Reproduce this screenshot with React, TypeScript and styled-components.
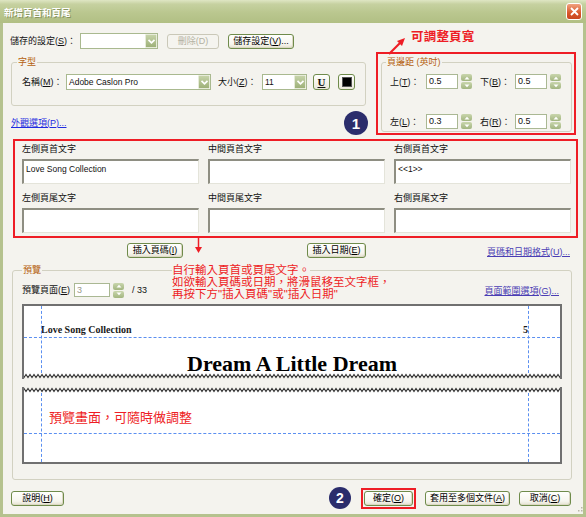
import React from 'react';
import styled, { createGlobalStyle } from 'styled-components';

const UI_FONT = `"Liberation Sans", "Noto Sans CJK TC", sans-serif`;
const SERIF = `"Liberation Serif", "Noto Serif CJK TC", serif`;
const RED = '#ee1d25';
const OLIVE_DARK = '#6f8b4b';
const GROUP_LINE = '#d2d1c1';
const LEGEND = '#b5610e';
const FACE = '#f4f3ee';
const GUIDE = '#5b8ff0';

const GlobalStyle = createGlobalStyle`
    * { box-sizing: border-box; }
    html, body { margin: 0; padding: 0; background: #ffffff; }
    body { font-family: ${UI_FONT}; font-size: 9px; color: #111; }
`;

const Window = styled.div`
    position: relative;
    width: 586px;
    height: 517px;
    display: flex;
    flex-direction: column;
    overflow: hidden;
`;

const TitleBar = styled.div`
    flex: none;
    height: 23px;
    display: flex;
    align-items: center;
    justify-content: space-between;
    padding: 0 4px;
    background: linear-gradient(to bottom, #dfe6c4 0%, #c6d1a0 18%, #bac78f 55%, #b1bf84 100%);
`;

const Title = styled.span`
    color: #fff;
    font-weight: bold;
    font-size: 9.5px;
    text-shadow: 1px 1px 0 rgba(90, 105, 55, 0.55);
`;

const CloseButton = styled.div`
    width: 16px;
    height: 17px;
    border: 1px solid #fff;
    border-radius: 3px;
    background: linear-gradient(to bottom, #f0a37f, #d9562a 60%, #c9461f);
    display: flex;
    align-items: center;
    justify-content: center;
`;

const Body = styled.div`
    flex: 1;
    display: flex;
    flex-direction: column;
    padding: 10px 7px 0;
    background: ${FACE};
    border: 3px solid #b5c28e;
    border-top: none;
`;

const Key = styled.u`
    text-decoration: underline;
`;

// ---------------------------------------------------
// generic controls
const Label = styled.span<{ $w?: number }>`
    flex: none;
    width: ${p => (p.$w ? `${p.$w}px` : 'auto')};
    white-space: nowrap;
    line-height: 12px;
`;

const Button = styled.button<{ $w: number }>`
    flex: none;
    width: ${p => p.$w}px;
    height: 15px;
    padding: 0;
    font-family: ${UI_FONT};
    font-size: 9px;
    line-height: 13px;
    color: #000;
    white-space: nowrap;
    border: 1px solid ${OLIVE_DARK};
    border-radius: 3px;
    background: linear-gradient(to bottom, #fffffd 0%, #f6f5ee 70%, #e4e1d0 100%);
    box-shadow: inset -1px -1px 0 #dcd8c4;
    &:disabled {
        color: #b3b1a2;
        border-color: #cac8b8;
        background: #f5f4ef;
        box-shadow: none;
    }
`;

const Combo = styled.div<{ $w: number }>`
    flex: none;
    width: ${p => p.$w}px;
    height: 16px;
    display: flex;
    align-items: center;
    background: #fff;
    border: 1px solid #a9b98f;
`;

const ComboText = styled.span`
    flex: 1;
    padding-left: 2px;
    font-size: 8.5px;
    white-space: nowrap;
    overflow: hidden;
`;

const DropButton = styled.span`
    width: 12px;
    height: 14px;
    display: flex;
    align-items: center;
    justify-content: center;
    background: linear-gradient(to bottom, #c6d3a9, #9eb179);
    border: 1px solid #e6ebd8;
    border-radius: 1px;
`;

const NumInput = styled.div<{ $w: number }>`
    flex: none;
    width: ${p => p.$w}px;
    height: 15px;
    padding-left: 2px;
    background: #fff;
    border: 1px solid #aab893;
    font-size: 9px;
    line-height: 13px;
`;

const Spinner = styled.div`
    flex: none;
    width: 11px;
    height: 15px;
    margin-left: 3px;
    display: flex;
    flex-direction: column;
    gap: 1px;
`;

const SpinHalf = styled.span`
    flex: 1;
    display: flex;
    align-items: center;
    justify-content: center;
    border-radius: 2px;
    background: linear-gradient(to bottom, #c9d6ad, #a2b57f);
`;

const Link = styled.span<{ $visited?: boolean }>`
    color: ${p => (p.$visited ? '#4a3db4' : '#1f2be0')};
    text-decoration: underline;
    white-space: nowrap;
    line-height: 12px;
`;

const Group = styled.fieldset`
    margin: 0;
    padding: 0;
    min-width: 0;
    border: 1px solid ${GROUP_LINE};
    border-radius: 3px;
`;

const Legend = styled.legend<{ $inset: number }>`
    margin-left: ${p => p.$inset}px;
    padding: 0 1px;
    color: ${LEGEND};
    font-size: 9px;
    line-height: 11px;
`;

const Badge = styled.div<{ $size: number }>`
    flex: none;
    width: ${p => p.$size}px;
    height: ${p => p.$size}px;
    border-radius: 50%;
    background: #2b2d6c;
    color: #fff;
    font-family: "Liberation Sans", sans-serif;
    font-weight: bold;
    font-size: ${p => Math.round(p.$size * 0.62)}px;
    display: flex;
    align-items: center;
    justify-content: center;
`;

// ---------------------------------------------------
// top area
const SettingsRow = styled.div`
    display: flex;
    align-items: center;
    height: 16px;
    gap: 9px;
`;

const TopArea = styled.div`
    display: flex;
    align-items: flex-start;
    margin-top: 3px;
`;

const LeftColumn = styled.div`
    width: 358px;
    padding-top: 5px;
`;

const FontGroup = styled(Group)`
    width: 355px;
    margin-left: 1px;
`;

const FontRow = styled.div`
    display: flex;
    align-items: center;
    height: 16px;
    margin: 6px 0 15px 10px;
`;

const StyleButton = styled.div<{ $ml: number }>`
    flex: none;
    width: 17px;
    height: 16px;
    margin-left: ${p => p.$ml}px;
    display: flex;
    align-items: center;
    justify-content: center;
    border: 1px solid ${OLIVE_DARK};
    border-radius: 3px;
    background: linear-gradient(to bottom, #fffffd, #ebe8da);
    font-family: "Liberation Serif", serif;
    font-weight: bold;
    font-size: 11px;
    text-decoration: underline;
`;

const Swatch = styled.span`
    width: 10px;
    height: 10px;
    background: #000;
    border: 1px solid #555;
`;

const LinkRow = styled.div`
    display: flex;
    align-items: center;
    justify-content: space-between;
    height: 24px;
    margin-top: 5px;
    padding-left: 1px;
`;

const MarginFrame = styled.div`
    width: 200px;
    margin-left: 8px;
    padding: 3px 0 1px 3px;
    border: 2px solid ${RED};
`;

const MarginGroup = styled(Group)`
    width: 191px;
`;

const MarginGrid = styled.div`
    display: grid;
    grid-template-rows: 15px 15px;
    row-gap: 25px;
    padding: 6px 0 2px 8px;
`;

const MarginRow = styled.div`
    display: flex;
    align-items: center;
`;

const SecondLabel = styled(Label)`
    margin-left: 8px;
`;

// ---------------------------------------------------
// text fields
const FieldFrame = styled.div`
    width: 565px;
    margin: 4px 0 0 3px;
    border: 2px solid ${RED};
`;

const FieldGrid = styled.div`
    display: grid;
    grid-template-columns: repeat(3, 177px);
    column-gap: 9px;
    row-gap: 8px;
    padding: 2px 0 3px 7px;
`;

const FieldLabel = styled.div`
    line-height: 12px;
    margin-bottom: 4px;
`;

const TextBox = styled.div`
    height: 25px;
    padding: 3px 2px 0;
    background: #fff;
    border-style: solid;
    border-width: 2px 1px 1px 2px;
    border-color: #8e8e82 #e4e4da #e4e4da #8e8e82;
    font-size: 8.5px;
    line-height: 10px;
    white-space: nowrap;
`;

const InsertRow = styled.div`
    display: flex;
    align-items: center;
    height: 15px;
    margin-top: 5px;
    padding: 0 6px 0 117px;
`;

const DateButton = styled(Button)`
    margin-left: 124px;
`;

const PushRight = styled.div`
    margin-left: auto;
    padding-top: 2px;
`;

// ---------------------------------------------------
// preview
const PreviewGroup = styled(Group)`
    width: 560px;
    margin: 7px 0 0 2px;
`;

const PagerRow = styled.div`
    display: flex;
    align-items: center;
    height: 14px;
    margin: 7px 12px 0 9px;
`;

const PagerInput = styled(NumInput)`
    height: 14px;
    color: #9a9a8a;
    line-height: 12px;
`;

const PageCount = styled.span`
    margin-left: 8px;
`;

const Pages = styled.div`
    display: flex;
    flex-direction: column;
    gap: 8px;
    padding: 7px 0 15px 9px;
`;

const PageSheet = styled.div`
    width: 540px;
    display: flex;
    flex-direction: column;
`;

const PageArea = styled.div<{ $edge: 'top' | 'bottom' }>`
    position: relative;
    height: ${p => (p.$edge === 'top' ? 69 : 71)}px;
    background: #fff;
    border: 2px solid #707070;
    ${p => (p.$edge === 'top' ? 'border-bottom: none;' : 'border-top: none;')}
`;

const GuideV = styled.div<{ $x: number }>`
    position: absolute;
    top: 0;
    bottom: 0;
    left: ${p => p.$x}px;
    border-left: 1px dashed ${GUIDE};
`;

const GuideH = styled.div<{ $y: number }>`
    position: absolute;
    left: 0;
    right: 0;
    top: ${p => p.$y}px;
    border-top: 1px dashed ${GUIDE};
`;

const HeaderLine = styled.div`
    display: flex;
    justify-content: space-between;
    padding: 18px 32px 0 17px;
    font-family: ${SERIF};
    font-weight: bold;
    font-size: 10px;
    line-height: 12px;
    color: #1a1a1a;
`;

const SongTitle = styled.div`
    margin-top: 15px;
    text-align: center;
    font-family: ${SERIF};
    font-weight: bold;
    font-size: 22px;
    line-height: 25px;
    color: #000;
`;

const PreviewNote = styled.div`
    padding: 17px 0 0 25px;
    color: ${RED};
    font-size: 13px;
    line-height: 16px;
`;

const FooterRow = styled.div`
    display: flex;
    align-items: center;
    height: 22px;
    margin-top: 7px;
    padding: 0 5px 0 1px;
`;

const Spacer = styled.div`
    flex: 1;
`;

const OkFrame = styled.div`
    margin-left: 10px;
    padding: 1px;
    border: 2px solid ${RED};
    display: flex;
`;

const FooterButton = styled(Button)`
    margin-left: 9px;
`;

// ---------------------------------------------------
// annotations drawn over the dialog
const Callout = styled.div<{ $x: number; $y: number }>`
    position: absolute;
    left: ${p => p.$x}px;
    top: ${p => p.$y}px;
    color: ${RED};
`;

const CalloutTitle = styled.span`
    font-weight: bold;
    font-size: 12.5px;
    line-height: 14px;
    letter-spacing: 0.2px;
`;

const NoteLine = styled.div`
    width: fit-content;
    background: ${FACE};
    font-size: 11.5px;
    line-height: 12px;
    white-space: nowrap;
`;

const Chevron = () => (
    <svg width="9" height="7" viewBox="0 0 9 7">
        <path d="M1.5 1.8 L4.5 4.8 L7.5 1.8" fill="none" stroke="#fff" strokeWidth="1.7" />
    </svg>
);

const Triangle = ({ up }: { up: boolean }) => (
    <svg width="6" height="4" viewBox="0 0 6 4">
        <path d={up ? 'M0.5 3.5 L3 0.8 L5.5 3.5 Z' : 'M0.5 0.5 L3 3.2 L5.5 0.5 Z'} fill="#fff" />
    </svg>
);

const SpinBox = () => (
    <Spinner>
        <SpinHalf><Triangle up /></SpinHalf>
        <SpinHalf><Triangle up={false} /></SpinHalf>
    </Spinner>
);

const DropDown: React.FC<{ w: number; text?: string }> = ({ w, text }) => (
    <Combo $w={w}>
        <ComboText>{text}</ComboText>
        <DropButton><Chevron /></DropButton>
    </Combo>
);

// zig-zag tear line of the preview page
const Tear: React.FC<{ edge: 'top' | 'bottom' }> = ({ edge }) => {
    const W = 540;
    const H = 6;
    const pts: string[] = [];
    for (let x = 0; x <= W; x += 2) {
        const hi = (x / 2) % 2 === 0;
        const y = edge === 'bottom' ? (hi ? 1.5 : 4.5) : (hi ? 4.5 : 1.5);
        pts.push(`${x},${y}`);
    }
    const line = pts.join(' ');
    const fill = edge === 'bottom' ? `0,0 ${line} ${W},0` : `0,${H} ${line} ${W},${H}`;
    return (
        <svg width={W} height={H} viewBox={`0 0 ${W} ${H}`} style={{ display: 'block' }}>
            <polygon points={fill} fill="#fff" />
            <polyline points={line} fill="none" stroke="#2e2e2e" strokeWidth="1.1" />
            <line x1="1" y1="0" x2="1" y2={H} stroke="#707070" strokeWidth="2" />
            <line x1={W - 1} y1="0" x2={W - 1} y2={H} stroke="#707070" strokeWidth="2" />
        </svg>
    );
};

const fields = [
    { label: '左側頁首文字', value: 'Love Song Collection' },
    { label: '中間頁首文字', value: '' },
    { label: '右側頁首文字', value: '<<1>>' },
    { label: '左側頁尾文字', value: '' },
    { label: '中間頁尾文字', value: '' },
    { label: '右側頁尾文字', value: '' },
];

const App: React.FC = () => {
    return (
        <>
            <GlobalStyle />
            <Window>
                <TitleBar>
                    <Title>新增頁首和頁尾</Title>
                    <CloseButton>
                        <svg width="9" height="9" viewBox="0 0 9 9">
                            <path d="M1 1 L8 8 M8 1 L1 8" stroke="#fff" strokeWidth="1.8" />
                        </svg>
                    </CloseButton>
                </TitleBar>
                <Body>
                    <SettingsRow>
                        <Label $w={61}>儲存的設定(<Key>S</Key>)：</Label>
                        <DropDown w={78} />
                        <Button $w={52} disabled>刪除(D)</Button>
                        <Button $w={66}>儲存設定(<Key>V</Key>)...</Button>
                    </SettingsRow>

                    <TopArea>
                        <LeftColumn>
                            <FontGroup>
                                <Legend $inset={5}>字型</Legend>
                                <FontRow>
                                    <Label $w={44}>名稱(<Key>M</Key>)：</Label>
                                    <DropDown w={145} text="Adobe Caslon Pro" />
                                    <Label $w={44} style={{ marginLeft: 7 }}>大小(<Key>Z</Key>)：</Label>
                                    <DropDown w={45} text="11" />
                                    <StyleButton $ml={6}>U</StyleButton>
                                    <StyleButton $ml={8}><Swatch /></StyleButton>
                                </FontRow>
                            </FontGroup>
                            <LinkRow>
                                <Link>外觀選項(<Key>P</Key>)...</Link>
                                <Badge $size={24}>1</Badge>
                            </LinkRow>
                        </LeftColumn>

                        <MarginFrame>
                            <MarginGroup>
                                <Legend $inset={4}>頁邊距 (英吋)</Legend>
                                <MarginGrid>
                                    <MarginRow>
                                        <Label $w={36}>上(<Key>T</Key>)：</Label>
                                        <NumInput $w={32}>0.5</NumInput>
                                        <SpinBox />
                                        <SecondLabel $w={35}>下(<Key>B</Key>)：</SecondLabel>
                                        <NumInput $w={32}>0.5</NumInput>
                                        <SpinBox />
                                    </MarginRow>
                                    <MarginRow>
                                        <Label $w={36}>左(<Key>L</Key>)：</Label>
                                        <NumInput $w={32}>0.3</NumInput>
                                        <SpinBox />
                                        <SecondLabel $w={35}>右(<Key>R</Key>)：</SecondLabel>
                                        <NumInput $w={32}>0.5</NumInput>
                                        <SpinBox />
                                    </MarginRow>
                                </MarginGrid>
                            </MarginGroup>
                        </MarginFrame>
                    </TopArea>

                    <FieldFrame>
                        <FieldGrid>
                            {fields.map(f => (
                                <div key={f.label}>
                                    <FieldLabel>{f.label}</FieldLabel>
                                    <TextBox>{f.value}</TextBox>
                                </div>
                            ))}
                        </FieldGrid>
                    </FieldFrame>

                    <InsertRow>
                        <Button $w={56}>插入頁碼(<Key>I</Key>)</Button>
                        <DateButton $w={59}>插入日期(<Key>E</Key>)</DateButton>
                        <PushRight>
                            <Link $visited>頁碼和日期格式(<Key>U</Key>)...</Link>
                        </PushRight>
                    </InsertRow>

                    <PreviewGroup>
                        <Legend $inset={9}>預覽</Legend>
                        <PagerRow>
                            <Label $w={52}>預覽頁面(<Key>E</Key>)</Label>
                            <PagerInput $w={36}>3</PagerInput>
                            <SpinBox />
                            <PageCount>/ 33</PageCount>
                            <PushRight>
                                <Link $visited>頁面範圍選項(<Key>G</Key>)...</Link>
                            </PushRight>
                        </PagerRow>
                        <Pages>
                            <PageSheet>
                                <PageArea $edge="top">
                                    <GuideV $x={17} />
                                    <GuideV $x={504} />
                                    <GuideH $y={31} />
                                    <HeaderLine>
                                        <span>Love Song Collection</span>
                                        <span>5</span>
                                    </HeaderLine>
                                    <SongTitle>Dream A Little Dream</SongTitle>
                                </PageArea>
                                <Tear edge="bottom" />
                            </PageSheet>
                            <PageSheet>
                                <Tear edge="top" />
                                <PageArea $edge="bottom">
                                    <GuideV $x={17} />
                                    <GuideV $x={504} />
                                    <GuideH $y={40} />
                                    <PreviewNote>預覽畫面，可隨時做調整</PreviewNote>
                                </PageArea>
                            </PageSheet>
                        </Pages>
                    </PreviewGroup>

                    <FooterRow>
                        <Button $w={53}>說明(<Key>H</Key>)</Button>
                        <Spacer />
                        <Badge $size={22}>2</Badge>
                        <OkFrame>
                            <Button $w={49}>確定(<Key>O</Key>)</Button>
                        </OkFrame>
                        <FooterButton $w={85}>套用至多個文件(<Key>A</Key>)</FooterButton>
                        <FooterButton $w={52}>取消(<Key>C</Key>)</FooterButton>
                    </FooterRow>
                </Body>

                {/* annotations */}
                <Callout $x={411} $y={30}>
                    <CalloutTitle>可調整頁寬</CalloutTitle>
                </Callout>
                <Callout $x={386} $y={36}>
                    <svg width="22" height="20" viewBox="0 0 22 20">
                        <path d="M3 18 L15 6" stroke={RED} strokeWidth="2.2" />
                        <path d="M19 2 L11 5 L16 10 Z" fill={RED} />
                    </svg>
                </Callout>
                <Callout $x={194} $y={238}>
                    <svg width="9" height="16" viewBox="0 0 9 16">
                        <path d="M4.5 0 L4.5 10" stroke={RED} strokeWidth="1.5" />
                        <path d="M1 9 L8 9 L4.5 15 Z" fill={RED} />
                    </svg>
                </Callout>
                <Callout $x={172} $y={264}>
                    <NoteLine>自行輸入頁首或頁尾文字。</NoteLine>
                    <NoteLine>如欲輸入頁碼或日期，將滑鼠移至文字框，</NoteLine>
                    <NoteLine>再按下方"插入頁碼"或"插入日期"</NoteLine>
                </Callout>
                <Callout $x={575} $y={505}>
                    <svg width="8" height="8" viewBox="0 0 8 8">
                        <rect x="6" y="2" width="1.5" height="1.5" fill="#b8b6a6" />
                        <rect x="3" y="5" width="1.5" height="1.5" fill="#b8b6a6" />
                        <rect x="6" y="5" width="1.5" height="1.5" fill="#b8b6a6" />
                    </svg>
                </Callout>
            </Window>
        </>
    );
};

export default App;
